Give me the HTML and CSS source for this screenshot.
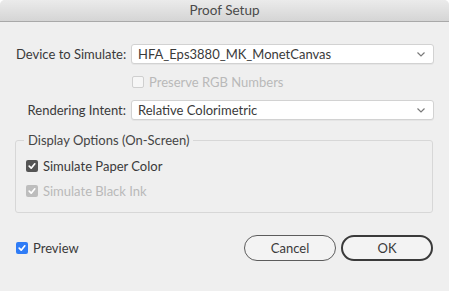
FILE: index.html
```html
<!DOCTYPE html>
<html>
<head>
<meta charset="utf-8">
<link rel="stylesheet" href="styles.css">
</head>
<body>
<div class="window">
  <div class="titlebar">Proof Setup</div>
  <div class="content">
    <div class="form">
      <label class="label">Device to Simulate:</label>
      <div class="select">
        <span>HFA_Eps3880_MK_MonetCanvas</span>
        <svg class="chev" width="8" height="5" viewBox="0 0 8 5"><path d="M0.5 0.5 L4 4 L7.5 0.5" fill="none" stroke="#7a7a7a" stroke-width="1.2"/></svg>
      </div>
      <span></span>
      <div class="check disabled">
        <span class="box empty"></span>
        <span>Preserve RGB Numbers</span>
      </div>
      <label class="label">Rendering Intent:</label>
      <div class="select">
        <span>Relative Colorimetric</span>
        <svg class="chev" width="8" height="5" viewBox="0 0 8 5"><path d="M0.5 0.5 L4 4 L7.5 0.5" fill="none" stroke="#7a7a7a" stroke-width="1.2"/></svg>
      </div>
    </div>
    <fieldset class="group">
      <legend>Display Options (On-Screen)</legend>
      <div class="check">
        <span class="box dark"><svg width="12" height="12" viewBox="0 0 12 12"><path d="M3.2 6.2 L5.2 8.2 L8.8 3.8" fill="none" stroke="#fff" stroke-width="1.7" stroke-linecap="round" stroke-linejoin="round"/></svg></span>
        <span>Simulate Paper Color</span>
      </div>
      <div class="check disabled">
        <span class="box grey"><svg width="12" height="12" viewBox="0 0 12 12"><path d="M3.2 6.2 L5.2 8.2 L8.8 3.8" fill="none" stroke="#fff" stroke-width="1.7" stroke-linecap="round" stroke-linejoin="round"/></svg></span>
        <span>Simulate Black Ink</span>
      </div>
    </fieldset>
    <div class="footer">
      <div class="check preview">
        <span class="box blue"><svg width="12" height="12" viewBox="0 0 12 12"><path d="M3.2 6.2 L5.2 8.2 L8.8 3.8" fill="none" stroke="#fff" stroke-width="1.7" stroke-linecap="round" stroke-linejoin="round"/></svg></span>
        <span>Preview</span>
      </div>
      <div class="buttons">
        <button class="btn">Cancel</button>
        <button class="btn primary">OK</button>
      </div>
    </div>
  </div>
</div>
</body>
</html>
```
FILE: styles.css
```css
html, body {
  margin: 0;
  padding: 0;
  background: #ffffff;
}
body {
  font-family: Lato, "Liberation Sans", sans-serif;
  font-size: 13px;
  color: #3a3a3a;
}
.window {
  width: 449px;
  height: 291px;
  background: #efefef;
  border-radius: 5px 5px 0 0;
  overflow: hidden;
  box-sizing: border-box;
}
.titlebar {
  height: 21px;
  line-height: 21px;
  text-align: center;
  font-size: 13.5px;
  color: #4a4a4a;
  background: linear-gradient(#ebebeb, #d5d5d5);
  border-bottom: 1px solid #a9a9a9;
}
.content {
  padding: 22px 16px 0 16px;
}
.form {
  display: grid;
  grid-template-columns: 110px 303px;
  column-gap: 5px;
  row-gap: 8px;
  align-items: center;
}
.label {
  text-align: right;
  white-space: nowrap;
}
.select {
  height: 20px;
  box-sizing: border-box;
  background: #ffffff;
  border: 1px solid #d2d2d2;
  border-radius: 3px;
  display: flex;
  align-items: center;
  justify-content: space-between;
  padding: 0 8px 0 6px;
  box-shadow: 0 1px 0 rgba(0,0,0,0.04);
}
.check {
  display: flex;
  align-items: center;
  gap: 5px;
  height: 20px;
}
.box {
  width: 12px;
  height: 12px;
  box-sizing: border-box;
  border-radius: 2px;
  display: inline-flex;
  flex: none;
}
.box.empty {
  border: 1px solid #cfcfcf;
  background: #f6f6f6;
}
.box.dark { background: #555555; }
.box.grey { background: #bdbdbd; }
.box.blue { background: #2f7cf6; }
.disabled { color: #b9b9b9; }
.form .check { margin-left: 1px; }
.group {
  margin: 12px 0 0 -1px;
  width: 418px;
  box-sizing: border-box;
  border: 1px solid #d7d7d7;
  border-radius: 3px;
  padding: 5px 10px 9px 10px;
}
.group legend {
  padding: 0 4px 0 4px;
  margin-left: -2px;
  color: #454545;
}
.group .check { height: 25px; }
.footer {
  margin-top: 22px;
  display: flex;
  justify-content: space-between;
  align-items: center;
}
.buttons {
  display: flex;
  gap: 5px;
}
.btn {
  font-family: Lato, "Liberation Sans", sans-serif;
  font-size: 13px;
  color: #3a3a3a;
  width: 92px;
  height: 26px;
  box-sizing: border-box;
  background: #f3f3f3;
  border: 1px solid #5c5c5c;
  border-radius: 13px;
  padding: 0;
}
.btn.primary {
  border: 2px solid #3a3a3a;
}
```
